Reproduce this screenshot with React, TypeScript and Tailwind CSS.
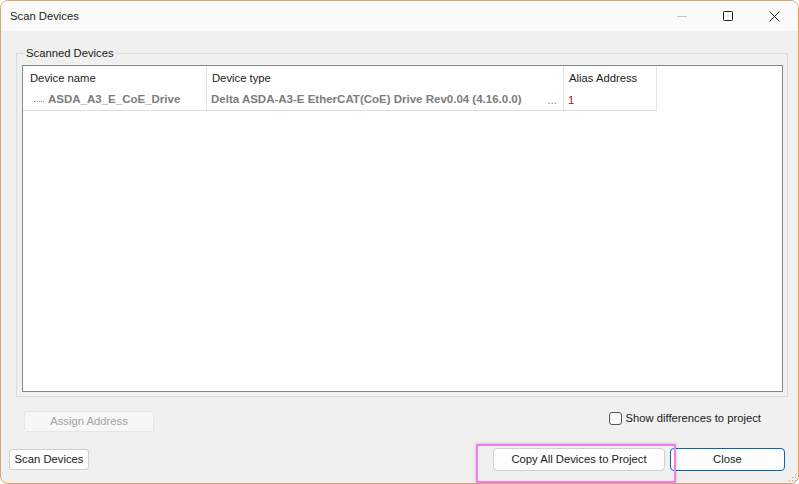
import React from "react";

function TitleControls() {
  return (
    <div className="flex items-center h-full">
      <div className="w-[46px] h-full flex items-center justify-center">
        <svg width="10" height="10" viewBox="0 0 10 10"><path d="M0 5.5h10" stroke="#c4c4c4" strokeWidth="1" /></svg>
      </div>
      <div className="w-[46px] h-full flex items-center justify-center">
        <svg width="10" height="10" viewBox="0 0 10 10"><rect x="0.5" y="0.5" width="9" height="9" rx="1" fill="none" stroke="#1a1a1a" strokeWidth="1" /></svg>
      </div>
      <div className="w-[46px] h-full flex items-center justify-center">
        <svg width="11" height="11" viewBox="0 0 11 11"><path d="M0.5 0.5l10 10M10.5 0.5l-10 10" stroke="#1a1a1a" strokeWidth="1" /></svg>
      </div>
    </div>
  );
}

export default function App() {
  const font = { fontFamily: '"Liberation Sans", Arial, sans-serif' };
  return (
    <div className="w-[799px] h-[484px] bg-white" style={font}>
      <div className="relative w-[799px] h-[484px] border border-[#dda46a] rounded-[8px] bg-[#f0f0f0] overflow-hidden flex flex-col text-[11.25px] text-black">
        {/* Title bar */}
        <div className="h-[30px] bg-[#fafafa] flex items-center justify-between shrink-0">
          <div className="pl-[9px] text-[#1a1a1a]">Scan Devices</div>
          <div className="h-full pr-[1px]">
            <TitleControls />
          </div>
        </div>

        {/* Group box */}
        <fieldset className="ml-[15px] mt-[15px] w-[772px] border border-[#dcdcdc] pl-[5px] pr-[4px] pb-[4px]">
          <legend className="ml-[2px] px-[2px] leading-[14px] text-[#1a1a1a]">Scanned Devices</legend>
          <div className="mt-[5px] h-[327px] border border-[#828790] bg-white">
            {/* header */}
            <div className="flex h-[24px] text-[#1a1a1a]">
              <div className="w-[184px] border-r border-[#e5e5e5] pl-[7px] flex items-center">Device name</div>
              <div className="w-[357px] border-r border-[#e5e5e5] pl-[5px] flex items-center">Device type</div>
              <div className="w-[93px] border-r border-[#e5e5e5] pl-[5px] flex items-center">Alias Address</div>
            </div>
            {/* row */}
            <div className="flex h-[21px] w-[634px] border-b border-[#e0e0e0]">
              <div className="w-[184px] border-r border-[#e5e5e5] flex items-center pl-[11px]">
                <span className="w-[10px] border-t border-dotted border-[#9a9a9a] mr-[4px] mt-[2px]"></span>
                <span className="font-bold text-[11.5px] text-[#7d7d7d]">ASDA_A3_E_CoE_Drive</span>
              </div>
              <div className="w-[357px] border-r border-[#e5e5e5] flex items-center pl-[4px] pr-[6px] justify-between">
                <span className="font-bold text-[11.5px] text-[#7d7d7d]">Delta ASDA-A3-E EtherCAT(CoE) Drive Rev0.04 (4.16.0.0)</span>
                <span className="text-[#7d7d7d]">...</span>
              </div>
              <div className="w-[93px] border-r border-[#e5e5e5] flex items-center pl-[4px] text-[#b01010]">1</div>
            </div>
          </div>
        </fieldset>

        {/* Assign + checkbox row */}
        <div className="flex items-center mt-[14px] h-[21px]">
          <div className="ml-[23px] w-[130px] h-[21px] rounded-[3px] border border-[#e6e6e6] bg-[#f7f7f7] flex items-center justify-center text-[#a3a3a3]">
            Assign Address
          </div>
          <div className="ml-auto mr-[37px] flex items-center -mt-[7px]">
            <div className="w-[13px] h-[13px] rounded-[3px] border border-[#555] bg-[#f7f7f7]"></div>
            <span className="ml-[4px] text-[#1a1a1a]">Show differences to project</span>
          </div>
        </div>

        {/* Bottom buttons */}
        <div className="flex items-center mt-[16px]">
          <div className="ml-[8px] w-[80px] h-[21px] rounded-[3px] border border-[#d0d0d0] bg-[#fdfdfd] flex items-center justify-center text-[#1a1a1a]">
            Scan Devices
          </div>
          <div className="ml-auto w-[172px] h-[23px] rounded-[4px] border border-[#d0d0d0] bg-[#fdfdfd] flex items-center justify-center text-[#1a1a1a]">
            Copy All Devices to Project
          </div>
          <div className="ml-[5px] mr-[13px] w-[115px] h-[23px] rounded-[4px] border border-[#0067c0] bg-[#fdfdfd] flex items-center justify-center text-[#1a1a1a]">
            Close
          </div>
        </div>

        {/* Pink highlight overlay */}
        <div className="absolute left-[475px] top-[443px] w-[200px] h-[39px] border-2 border-[#f27ff2] shadow-[0_0_3px_rgba(0,0,0,0.25)] pointer-events-none"></div>

        {/* Resize grip */}
        <svg className="absolute right-[1px] bottom-[1px]" width="8" height="8" viewBox="0 0 8 8">
          <rect x="6" y="0" width="1" height="1" fill="#a0a0a0" />
          <rect x="3" y="3" width="1" height="1" fill="#a0a0a0" />
          <rect x="6" y="3" width="1" height="1" fill="#a0a0a0" />
          <rect x="0" y="6" width="1" height="1" fill="#a0a0a0" />
          <rect x="3" y="6" width="1" height="1" fill="#a0a0a0" />
          <rect x="6" y="6" width="1" height="1" fill="#a0a0a0" />
        </svg>
      </div>
    </div>
  );
}
